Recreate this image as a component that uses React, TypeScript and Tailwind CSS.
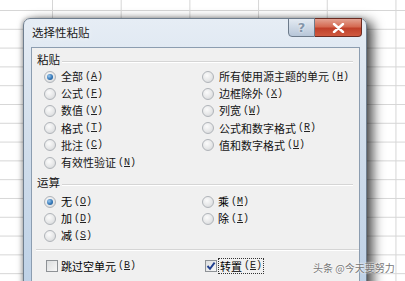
import React from "react";

const cjk = "font-['Noto_Sans_CJK_SC','Noto_Sans',sans-serif]";

function Radio({ checked }: { checked?: boolean }) {
  return (
    <span className="relative inline-block w-[12px] h-[12px] shrink-0 rounded-full border border-[#b0b4b9] bg-[radial-gradient(circle_at_40%_35%,#fbfbfb_0%,#e6e7e8_55%,#cfd1d4_100%)]">
      {checked && (
        <span className="absolute left-[2px] top-[2px] w-[6px] h-[6px] rounded-full bg-[radial-gradient(circle_at_35%_35%,#9cc8ee_0%,#3478b8_55%,#1c4f86_100%)]" />
      )}
    </span>
  );
}

function Key({ k }: { k: string }) {
  return (
    <span className="ml-[2px] text-[10px] leading-none font-['Liberation_Mono',monospace] text-[#222]">
      (<span className="underline underline-offset-[1px]">{k}</span>)
    </span>
  );
}

function Opt({ text, k, checked }: { text: string; k: string; checked?: boolean }) {
  return (
    <div className="flex items-center h-[17.2px]">
      <Radio checked={checked} />
      <span className={`ml-[5px] text-[11px] leading-none text-[#141414] ${cjk}`}>{text}</span>
      <Key k={k} />
    </div>
  );
}

function Check({ checked }: { checked?: boolean }) {
  return (
    <span className="relative inline-block w-[12px] h-[12px] shrink-0 border border-[#8e9296] bg-[linear-gradient(135deg,#dcdedf,#f7f7f7)]">
      {checked && (
        <svg className="absolute left-[0px] top-[0px]" width="10" height="10" viewBox="0 0 10 10">
          <path d="M1.5 5 L4 7.8 L8.6 1.6" fill="none" stroke="#1f3f8f" strokeWidth="1.9" />
        </svg>
      )}
    </span>
  );
}

function GroupLabel({ text }: { text: string }) {
  return (
    <div className="flex items-center h-[17px] pl-[5px] pr-[6px]">
      <span className={`text-[11.5px] leading-none text-[#141414] ${cjk}`}>{text}</span>
      <div className="flex-1 ml-[2px] mt-[4px] border-t border-[#d5d5d5] border-b border-b-white" />
    </div>
  );
}

export default function App() {
  return (
    <div className="relative w-[405px] h-[281px] overflow-hidden bg-white bg-[linear-gradient(to_right,#d6d6d6_1px,transparent_1px),linear-gradient(to_bottom,#d6d6d6_1px,transparent_1px)] bg-[size:68.7px_18.8px] bg-[position:52px_10px]">
      {/* dialog window */}
      <div className="absolute left-[23px] top-[18px] w-[344px] h-[280px] rounded-t-[7px] border border-[#6f7e8e] bg-[linear-gradient(to_bottom,#e6edf5_0%,#d3dfec_40%,#bcd0e6_100%)] shadow-[6px_3px_12px_rgba(0,0,0,0.7),-1px_0_4px_rgba(0,0,0,0.3)] flex flex-col">
        {/* title bar */}
        <div className="relative h-[28px] flex items-center pl-[8px]">
          <span className={`text-[11.5px] text-[#1a1a1a] ${cjk} [text-shadow:0_0_6px_rgba(255,255,255,0.9)]`}>选择性粘贴</span>
          <div className="absolute top-[-1px] right-[4px] flex">
            <div className="w-[27px] h-[19px] rounded-bl-[4px] border border-[#6d7b8b] bg-[linear-gradient(to_bottom,#e3eaf2_0%,#cdd8e5_50%,#b7c6d8_100%)] flex items-center justify-center">
              <span className="text-[13px] font-bold leading-none text-[#8395aa] font-['DejaVu_Sans',sans-serif] [text-shadow:0_0_2px_#fff]">?</span>
            </div>
            <div className="w-[47px] h-[19px] rounded-br-[4px] border border-l-0 border-[#6b2b22] bg-[linear-gradient(to_bottom,#e3a292_0%,#d56a52_45%,#c0402a_55%,#d05a40_100%)] flex items-center justify-center">
              <svg width="13" height="10" viewBox="0 0 13 10">
                <path d="M2 1 L11 9 M11 1 L2 9" stroke="#fff" strokeWidth="2.4" strokeLinecap="round" />
              </svg>
            </div>
          </div>
        </div>
        {/* client area */}
        <div className="ml-[7px] mr-[6px] flex-1 bg-[#f0f0f0] border border-[#8c9db0] flex flex-col pt-[3px]">
          <GroupLabel text="粘贴" />
          <div className="grid grid-cols-[158px_1fr] pl-[12px]">
            <div className="flex flex-col">
              <Opt text="全部" k="A" checked />
              <Opt text="公式" k="F" />
              <Opt text="数值" k="V" />
              <Opt text="格式" k="T" />
              <Opt text="批注" k="C" />
              <Opt text="有效性验证" k="N" />
            </div>
            <div className="flex flex-col">
              <Opt text="所有使用源主题的单元" k="H" />
              <Opt text="边框除外" k="X" />
              <Opt text="列宽" k="W" />
              <Opt text="公式和数字格式" k="R" />
              <Opt text="值和数字格式" k="U" />
            </div>
          </div>
          <div className="mt-[3px]">
            <GroupLabel text="运算" />
          </div>
          <div className="grid grid-cols-[158px_1fr] pl-[12px] mt-[2px]">
            <div className="flex flex-col">
              <div className="flex items-center h-[17px]"><Radio checked /><span className={`ml-[5px] text-[11px] leading-none ${cjk}`}>无</span><Key k="O" /></div>
              <div className="flex items-center h-[17px]"><Radio /><span className={`ml-[5px] text-[11px] leading-none ${cjk}`}>加</span><Key k="D" /></div>
              <div className="flex items-center h-[17px]"><Radio /><span className={`ml-[5px] text-[11px] leading-none ${cjk}`}>减</span><Key k="S" /></div>
            </div>
            <div className="flex flex-col">
              <div className="flex items-center h-[17px]"><Radio /><span className={`ml-[4px] text-[11px] leading-none ${cjk}`}>乘</span><Key k="M" /></div>
              <div className="flex items-center h-[17px]"><Radio /><span className={`ml-[4px] text-[11px] leading-none ${cjk}`}>除</span><Key k="I" /></div>
            </div>
          </div>
          <div className="mt-[5px] ml-[4px] border-t border-[#d5d5d5] border-b border-b-white" />
          <div className="grid grid-cols-[159px_1fr] pl-[14px] h-[30px] items-center">
            <div className="flex items-center">
              <Check />
              <span className={`ml-[3px] text-[11px] leading-none ${cjk}`}>跳过空单元</span>
              <Key k="B" />
            </div>
            <div className="flex items-center">
              <Check checked />
              <span className="ml-[1px] flex items-center px-[1px] h-[16px] border border-dotted border-[#333]">
                <span className={`text-[11px] leading-none ${cjk}`}>转置</span>
                <Key k="E" />
              </span>
            </div>
          </div>
        </div>
      </div>
      {/* watermark */}
      <div className={`absolute left-[313px] top-[260px] text-[10px] leading-[16px] text-[#777] ${cjk} [text-shadow:0_0_2px_#fff,0_0_2px_#fff]`}>
        头条 @今天要努力
      </div>
    </div>
  );
}
